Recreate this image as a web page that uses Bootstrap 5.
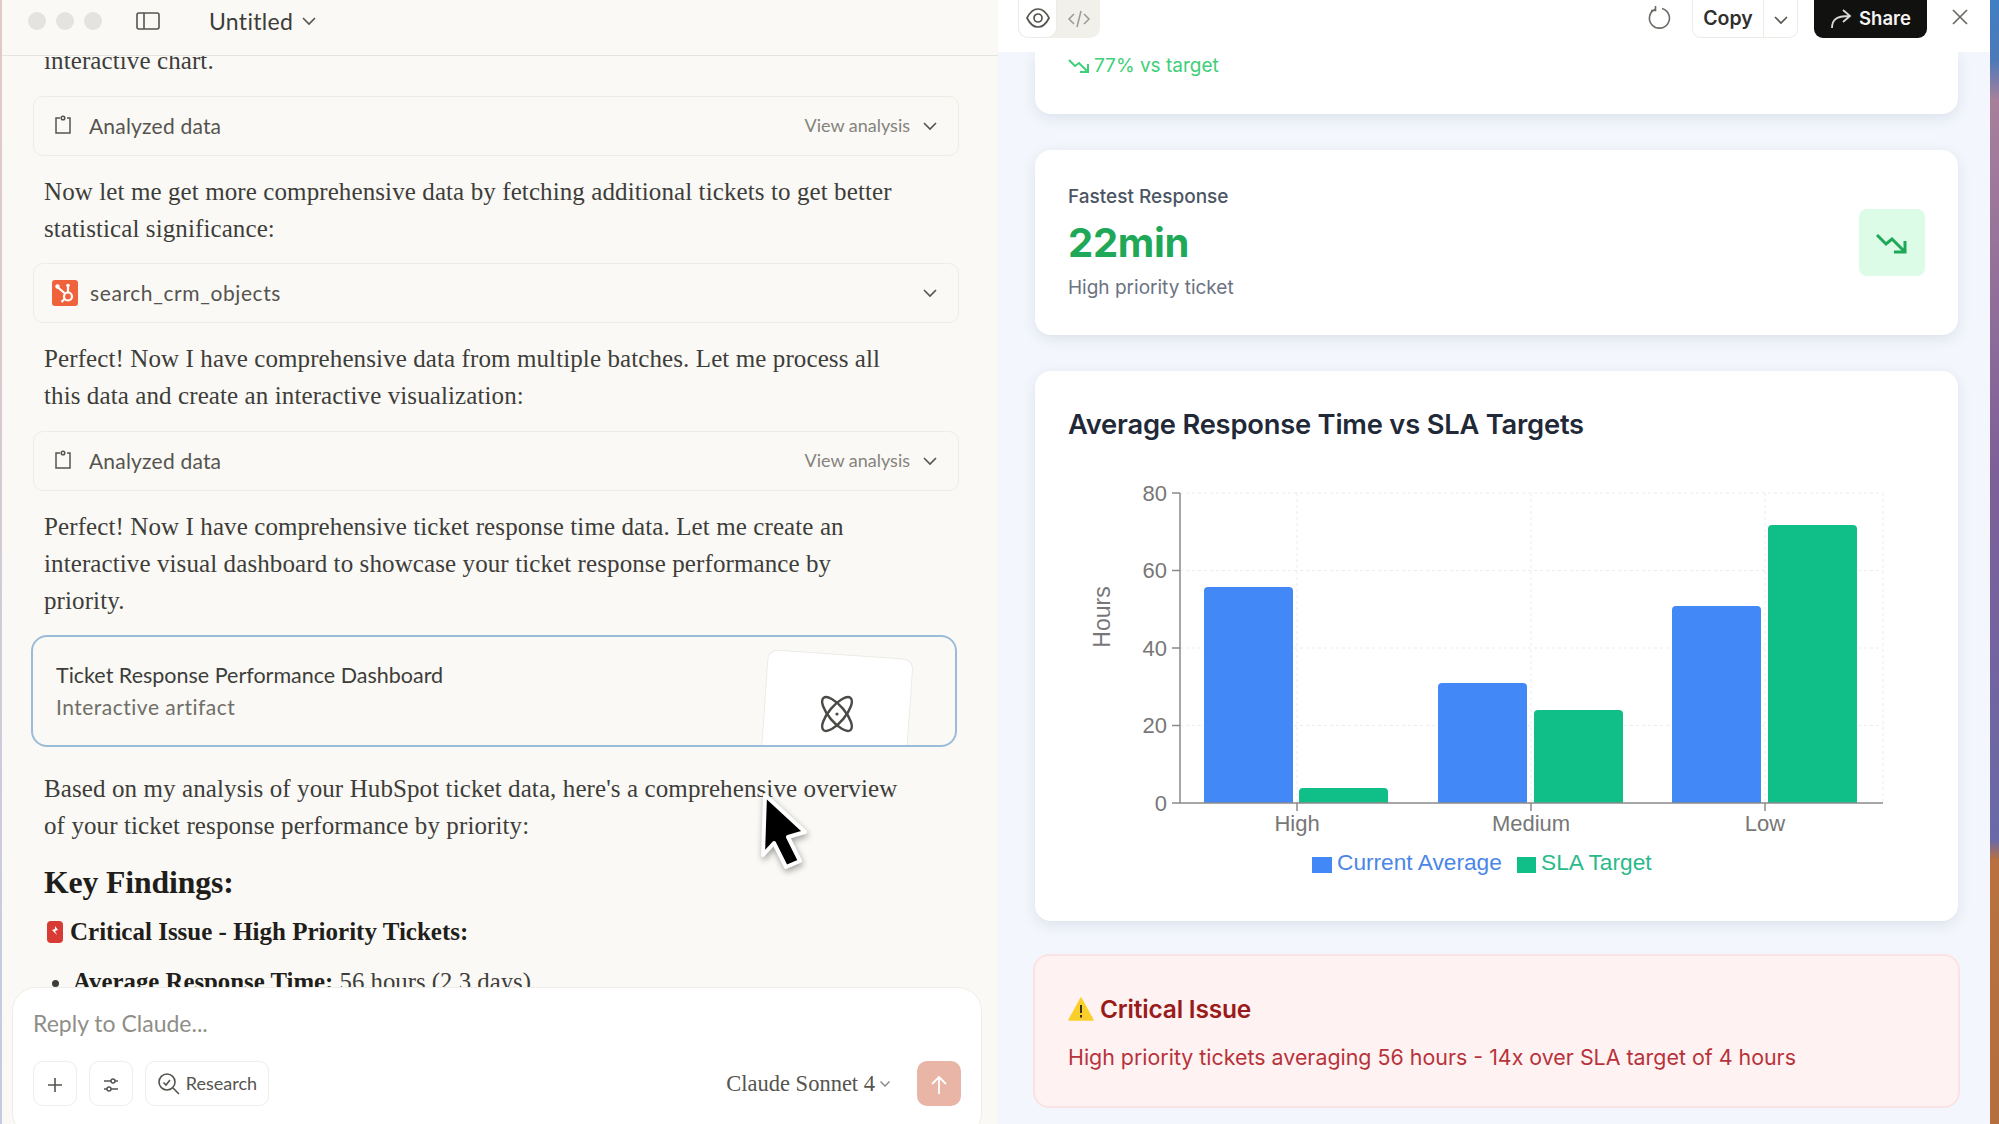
<!DOCTYPE html>
<html lang="en">
<head>
  <meta charset="UTF-8" />
  <title>Untitled - Claude</title>
  <link href="https://cdn.jsdelivr.net/npm/bootstrap@5.3.3/dist/css/bootstrap.min.css" rel="stylesheet">
  <style>
    html, body { height: 100%; }
    body { background: #fff; overflow: hidden; font-family: "Inter", "Liberation Sans", sans-serif; }
    .app-shell { height: 1124px; }
    .wall-left { width: 2px; background: linear-gradient(#e3c9c6, #c3cce4); }
    .wall-right { width: 9px; background: linear-gradient(#3f7fc4 0, #4d79b8 60px, #a8809c 100px, #7d5f98 480px, #6a6aa8 840px, #b8713f 860px, #b56f3e 100%); }

    /* chat side */
    .chat-pane { width: 996px; background: #faf9f5; position: relative; overflow: hidden; }
    .chat-head { height: 56px; background: #faf9f5; border-bottom: 1px solid #e6e4de; padding: 12px 0 0 26px; position: relative; z-index: 2; flex-shrink: 0; }
    .light-dots { gap: 10px; margin-right: 25px; }
    .light-dot { width: 18px; height: 18px; border-radius: 50%; background: #e4e3df; }
    .doc-name { font-size: 23px; line-height: 18px; color: #3d3d3a; font-family: "Lato", sans-serif; margin-left: 62px; letter-spacing: .3px; }
    .side-icon { margin-left: 9px; margin-right: -13px; }
    .chat-flow { padding: 0 39px 0 31px; margin-top: -14px; font-family: "Liberation Serif", serif; color: #3d3d3a; }
    .chat-msg { font-size: 25px; line-height: 37px; margin: 0 11px 16.5px 11px; letter-spacing: .1px; width: 860px; }
    .tool-row { height: 60px; border: 1px solid #eeece6; border-radius: 10px; background: #faf9f5; padding: 0 20px 0 19px; margin-bottom: 17px; font-family: "Lato", sans-serif; font-size: 21px; letter-spacing: .2px; color: #55544f; }
    .tool-link { font-size: 18px; color: #85837d; letter-spacing: 0; margin-right: 12px; }
    .tool-code { margin-left: 12px; letter-spacing: .6px; }
    .hub-logo { margin-left: -1px; }
    .artifact-box { height: 112px; width: 926px; margin-left: -2px; border: 2px solid #9bbcd9; border-radius: 16px; padding: 22px 23px; position: relative; overflow: hidden; margin-bottom: 23px; font-family: "Lato", sans-serif; }
    .artifact-name { font-size: 21.5px; color: #3d3d3a; line-height: 32px; }
    .artifact-kind { font-size: 21px; color: #6f6e68; line-height: 32px; letter-spacing: .5px; }
    .artifact-thumb { position: absolute; left: 730px; top: 17px; width: 146px; height: 140px; background: #fff; border: 1px solid #ecebe6; border-radius: 10px; transform: rotate(4deg); }
    .artifact-atom { position: absolute; left: 785px; top: 58px; }
    .key-title { font-size: 31.7px; font-weight: 700; line-height: 40px; margin: 19px 11px 10px; color: #1f1e1b; letter-spacing: -.1px; }
    .crit-line { font-size: 25px; font-weight: 700; line-height: 37px; margin: 0 11px 13px 13px; color: #1f1e1b; gap: 6px; }
    .finding-list { font-size: 24.8px; line-height: 37px; margin: 0; padding-left: 40px; }
    .finding-list strong { color: #1f1e1b; }
    .composer { position: absolute; left: 10px; top: 987px; width: 970px; height: 150px; background: #fff; border: 1px solid #efeee9; border-radius: 24px; padding: 19px 20px; z-index: 3; }
    .composer-hint { font-size: 23px; color: #8f8e88; font-family: "Lato", sans-serif; line-height: 32px; }
    .composer-tools { margin-top: 22px; }
    .tool-btn { height: 45px; min-width: 44px; padding: 0; border: 1px solid #eeede8; border-radius: 10px; background: #fff; color: #55544f; font-family: "Lato", sans-serif; font-size: 18px; }
    .tool-btn.research-btn { width: 124px; gap: 5px; }
    .model-pick { font-family: "Liberation Serif", serif; font-size: 22.5px; color: #55544f; margin-right: 18px; }
    .send-btn { width: 44px; height: 45px; padding: 0; background: #e8b5a6; border: 0; border-radius: 10px; }
    .send-btn:hover { background: #e8b5a6; }
    .cursor-art { position: absolute; left: 748px; top: 785px; z-index: 5; filter: drop-shadow(1px 3px 3px rgba(0, 0, 0, .35)); }

    /* artifact side */
    .art-pane { width: 992px; background: #f3f6fc; position: relative; overflow: hidden; }
    .art-head { height: 52px; background: #fff; position: relative; z-index: 2; flex-shrink: 0; padding: 0 21px 0 20px; }
    .view-toggle { margin-top: -1px; width: 82px; height: 39px; background: #f1f0ea; border-radius: 0 0 10px 10px; }
    .view-on { width: 39px; height: 39px; background: #fff; border: 1px solid #ecebe6; border-top: 0; border-radius: 0 0 10px 10px; }
    .copy-btn { height: 38px; border: 1px solid #ecebe6; border-top: 0; border-radius: 0 0 9px 9px; background: #fff; font-weight: 600; font-size: 19.5px; color: #2f2f2c; padding: 0; }
    .copy-main { width: 72px; border-right: 1px solid #ecebe6; }
    .copy-more { width: 34px; }
    .share-btn { width: 113px; height: 38px; background: #111110; color: #f4f4f2; border-radius: 0 0 9px 9px; font-weight: 600; font-size: 18.5px; gap: 7px; }
    .head-icon { margin-top: 5px; }
    .reload-icon { margin-right: 20px; }
    .art-flow { padding: 0 32px 0 37px; }
    .stat-box { border: 0; border-radius: 16px; background: #fff; box-shadow: 0 4px 14px rgba(30, 50, 90, .1); margin-bottom: 36px; }
    .stat-top { height: 62px; padding: 0 33px; border-radius: 0 0 16px 16px; color: #3ecf78; font-size: 19px; }
    .stat-main { height: 185px; padding: 0 33px; }
    .stat-label { font-size: 19px; font-weight: 500; color: #4b5563; line-height: 26px; padding-top: 1px; }
    .stat-value { font-size: 40px; font-weight: 700; color: #1ea858; line-height: 58px; margin-top: 4px; letter-spacing: -.3px; }
    .stat-note { font-size: 19px; color: #6b7280; line-height: 28px; margin-top: 2px; }
    .stat-icon { width: 66px; height: 67px; background: #dcfce7; border-radius: 8px; }
    .chart-box { height: 550px; padding: 34px 33px 0; margin-bottom: 33px; }
    .chart-title { font-size: 27.3px; font-weight: 600; color: #1f2937; line-height: 40px; margin: 0; letter-spacing: -.2px; }
    .chart-svg { position: absolute; left: 0; top: 0; }
    .chart-svg text { font-family: "Liberation Sans", Arial, sans-serif; }
    .issue-box { height: 154px; margin: 0 -2px; padding: 2px 33px 0; background: #fef2f2; border: 2px solid #fbe3e3; border-radius: 16px; color: #b8323a; }
    .issue-title { font-size: 24.5px; font-weight: 600; color: #991b1b; line-height: 36px; gap: 6px; margin-bottom: 14px; letter-spacing: -.2px; }
    .issue-text { font-size: 21.4px; line-height: 32px; }
  </style>
</head>
<body>
  <div class="app-shell d-flex">
    <div class="wall-left"></div>

    <!-- Chat -->
    <div class="chat-pane d-flex flex-column">
      <div class="chat-head d-flex align-items-start">
        <div class="light-dots d-flex">
          <span class="light-dot"></span><span class="light-dot"></span><span class="light-dot"></span>
        </div>
        <svg class="side-icon" width="24" height="18" viewBox="0 0 24 18" fill="none" stroke="#55544f" stroke-width="1.6"><rect x="1" y="1" width="22" height="16" rx="2"/><path d="M8 1v16"/></svg>
        <span class="doc-name">Untitled</span>
        <svg class="ms-2 mt-1" width="16" height="10" viewBox="0 0 16 10" fill="none" stroke="#55544f" stroke-width="1.6"><path d="M2 2l6 6 6-6"/></svg>
      </div>

      <div class="chat-flow">
        <p class="chat-msg">interactive chart.</p>

        <div class="tool-row d-flex align-items-center">
          <svg width="20" height="22" viewBox="0 0 20 22" fill="none" stroke="#55544f" stroke-width="1.5"><path d="M7 3H3v15h14V3h-3"/><circle cx="10" cy="3" r="1.8"/></svg>
          <span class="ms-3 flex-grow-1">Analyzed data</span>
          <span class="tool-link">View analysis</span>
          <svg width="16" height="10" viewBox="0 0 16 10" fill="none" stroke="#55544f" stroke-width="1.6"><path d="M2 2l6 6 6-6"/></svg>
        </div>

        <p class="chat-msg">Now let me get more comprehensive data by fetching additional tickets to get better statistical significance:</p>

        <div class="tool-row d-flex align-items-center">
          <svg class="hub-logo" width="26" height="26" viewBox="0 0 26 26"><rect width="26" height="26" rx="3" fill="#f0623c"/><g fill="none" stroke="#fff" stroke-width="2.2"><circle cx="16" cy="16.5" r="4"/><path d="M16 12.5V7M13 13.5L6 7.5M12.5 19l-3 3"/></g><circle cx="5.5" cy="6.5" r="2.2" fill="#fff"/><circle cx="16" cy="5.5" r="1.8" fill="#fff"/></svg>
          <span class="tool-code flex-grow-1">search_crm_objects</span>
          <svg width="16" height="10" viewBox="0 0 16 10" fill="none" stroke="#55544f" stroke-width="1.6"><path d="M2 2l6 6 6-6"/></svg>
        </div>

        <p class="chat-msg">Perfect! Now I have comprehensive data from multiple batches. Let me process all this data and create an interactive visualization:</p>

        <div class="tool-row d-flex align-items-center">
          <svg width="20" height="22" viewBox="0 0 20 22" fill="none" stroke="#55544f" stroke-width="1.5"><path d="M7 3H3v15h14V3h-3"/><circle cx="10" cy="3" r="1.8"/></svg>
          <span class="ms-3 flex-grow-1">Analyzed data</span>
          <span class="tool-link">View analysis</span>
          <svg width="16" height="10" viewBox="0 0 16 10" fill="none" stroke="#55544f" stroke-width="1.6"><path d="M2 2l6 6 6-6"/></svg>
        </div>

        <p class="chat-msg">Perfect! Now I have comprehensive ticket response time data. Let me create an interactive visual dashboard to showcase your ticket response performance by priority.</p>

        <div class="artifact-box">
          <div class="artifact-name">Ticket Response Performance Dashboard</div>
          <div class="artifact-kind">Interactive artifact</div>
          <div class="artifact-thumb"></div>
          <svg class="artifact-atom" width="38" height="38" viewBox="0 0 38 38" fill="none" stroke="#4a4a46" stroke-width="2.4">
            <ellipse cx="19" cy="19" rx="8" ry="21" transform="rotate(40 19 19)"/>
            <ellipse cx="19" cy="19" rx="8" ry="21" transform="rotate(-40 19 19)"/>
            <circle cx="19" cy="19" r="1.6" fill="#4a4a46" stroke="none"/>
          </svg>
        </div>

        <p class="chat-msg">Based on my analysis of your HubSpot ticket data, here's a comprehensive overview of your ticket response performance by priority:</p>

        <div class="key-title">Key Findings:</div>
        <div class="crit-line d-flex align-items-center">
          <svg width="18" height="24" viewBox="0 0 18 24"><rect x="1" y="1" width="16" height="22" rx="4" fill="#d83a34"/><path d="M9 6l3 4-3 1 2 4-5-5 3-1z" fill="#fff"/></svg>
          <span>Critical Issue - High Priority Tickets:</span>
        </div>
        <ul class="finding-list">
          <li><strong>Average Response Time:</strong> 56 hours (2.3 days)</li>
        </ul>
      </div>

      <div class="composer">
        <div class="composer-hint">Reply to Claude...</div>
        <div class="composer-tools d-flex align-items-center gap-2">
          <button class="btn tool-btn" aria-label="Add"><svg width="18" height="18" viewBox="0 0 18 18" stroke="#55544f" stroke-width="1.6"><path d="M9 2v14M2 9h14"/></svg></button>
          <button class="btn tool-btn ms-1" aria-label="Options"><svg width="18" height="18" viewBox="0 0 18 18" fill="none" stroke="#55544f" stroke-width="1.5"><path d="M2 5h7M13 5h3M2 13h3M9 13h7"/><circle cx="11" cy="5" r="2"/><circle cx="7" cy="13" r="2"/></svg></button>
          <button class="btn tool-btn research-btn ms-1 d-flex align-items-center justify-content-center"><svg width="24" height="24" viewBox="0 0 24 24" fill="none" stroke="#55544f" stroke-width="1.6"><circle cx="10" cy="10" r="8"/><path d="M16 16l6 6M6.5 10.5l2.5 2.5 4-5"/></svg>Research</button>
          <div class="model-pick ms-auto d-flex align-items-center gap-1">Claude Sonnet 4 <svg width="12" height="8" viewBox="0 0 12 8" fill="none" stroke="#85837d" stroke-width="1.3"><path d="M1.5 1.5L6 6l4.5-4.5"/></svg></div>
          <button class="btn send-btn" aria-label="Send"><svg width="18" height="20" viewBox="0 0 18 20" fill="none" stroke="#fff" stroke-width="1.8"><path d="M9 19V2M2 9l7-7 7 7"/></svg></button>
        </div>
      </div>

      <svg class="cursor-art" width="64" height="92" viewBox="0 0 64 92">
        <path d="M15 10L55 47 38 52 50 76 36 82 24 58 13 70z" fill="#000" stroke="#fff" stroke-width="4" stroke-linejoin="round"/>
      </svg>
    </div>

    <!-- Artifact -->
    <div class="art-pane d-flex flex-column">
      <div class="art-head d-flex align-items-start">
        <div class="view-toggle d-flex">
          <div class="view-on d-flex align-items-center justify-content-center">
            <svg width="26" height="22" viewBox="0 0 26 22" fill="none" stroke="#55544f" stroke-width="1.7"><path d="M2 11c3-6 7-9 11-9s8 3 11 9c-3 6-7 9-11 9s-8-3-11-9z"/><circle cx="13" cy="11" r="4"/></svg>
          </div>
          <div class="flex-grow-1 d-flex align-items-center justify-content-center">
            <svg width="24" height="20" viewBox="0 0 24 20" fill="none" stroke="#9b9a93" stroke-width="1.5"><path d="M7 5l-5 5 5 5M17 5l5 5-5 5M14 2l-4 16"/></svg>
          </div>
        </div>
        <svg class="head-icon reload-icon ms-auto" width="26" height="26" viewBox="0 0 26 26" fill="none" stroke="#6b6a65" stroke-width="1.6"><path d="M9 4.2A10 10 0 1 0 16 3.5M9.5 1v4.5H5"/></svg>
        <div class="d-flex">
          <button class="btn copy-btn copy-main rounded-end-0">Copy</button>
          <button class="btn copy-btn copy-more rounded-start-0 border-start-0"><svg width="16" height="10" viewBox="0 0 16 10" fill="none" stroke="#55544f" stroke-width="1.6"><path d="M2 2l6 6 6-6"/></svg></button>
        </div>
        <div class="share-btn d-flex align-items-center justify-content-center ms-3">
          <svg width="22" height="22" viewBox="0 0 22 22" fill="none" stroke="#d8d8d4" stroke-width="1.8"><path d="M2 20c0-8 4-12 17-12M13 2l7 6-7 6"/></svg>
          Share
        </div>
        <svg class="head-icon ms-4 mt-2" width="18" height="18" viewBox="0 0 18 18" stroke="#6b6a65" stroke-width="1.7"><path d="M2 2l14 14M16 2L2 16"/></svg>
      </div>

      <div class="art-flow">
        <div class="card stat-box stat-top flex-row align-items-start">
          <div class="d-flex align-items-center gap-1">
            <svg width="22" height="16" viewBox="0 0 22 16" fill="none" stroke="#3ecf78" stroke-width="2"><path d="M1 2l6 6 4-3 9 9M20 6v8h-8"/></svg>
            <span>77% vs target</span>
          </div>
        </div>

        <div class="card stat-box stat-main flex-row align-items-center justify-content-between">
          <div>
            <div class="stat-label">Fastest Response</div>
            <div class="stat-value">22min</div>
            <div class="stat-note">High priority ticket</div>
          </div>
          <div class="stat-icon d-flex align-items-center justify-content-center">
            <svg width="32" height="22" viewBox="0 0 32 22" fill="none" stroke="#1ea858" stroke-width="3"><path d="M1 3l9 9 6-5 13 13M29 9v11H18"/></svg>
          </div>
        </div>

        <div class="card stat-box chart-box position-relative">
          <h3 class="chart-title">Average Response Time vs SLA Targets</h3>
          <!-- coords relative to the card: x-1035, y-371 -->
          <svg class="chart-svg" width="922" height="550" viewBox="0 0 922 550">
            <g stroke="#ececec" stroke-width="1" stroke-dasharray="3 3" fill="none">
              <path d="M145 122H848M145 199.5H848M145 277H848M145 354.5H848"/>
              <path d="M262 122V432M496 122V432M730 122V432M848 122V432"/>
            </g>
            <g fill="#4289f7">
              <path d="M169 432V220a4 4 0 0 1 4-4h81a4 4 0 0 1 4 4V432z"/>
              <path d="M403 432V316a4 4 0 0 1 4-4h81a4 4 0 0 1 4 4V432z"/>
              <path d="M637 432V239a4 4 0 0 1 4-4h81a4 4 0 0 1 4 4V432z"/>
            </g>
            <g fill="#10bf87">
              <path d="M264 432V421a4 4 0 0 1 4-4h81a4 4 0 0 1 4 4V432z"/>
              <path d="M499 432V343a4 4 0 0 1 4-4h81a4 4 0 0 1 4 4V432z"/>
              <path d="M733 432V158a4 4 0 0 1 4-4h81a4 4 0 0 1 4 4V432z"/>
            </g>
            <g stroke="#8a8a8a" stroke-width="1.5" fill="none">
              <path d="M145 122V432H848"/>
              <path d="M137 122h8M137 199.5h8M137 277h8M137 354.5h8M137 432h8"/>
              <path d="M262 432v8M496 432v8M730 432v8"/>
            </g>
            <g fill="#777" font-size="22" text-anchor="end">
              <text x="132" y="130">80</text>
              <text x="132" y="207">60</text>
              <text x="132" y="285">40</text>
              <text x="132" y="362">20</text>
              <text x="132" y="440">0</text>
            </g>
            <g fill="#777" font-size="22" text-anchor="middle">
              <text x="262" y="460">High</text>
              <text x="496" y="460">Medium</text>
              <text x="730" y="460">Low</text>
            </g>
            <text x="0" y="0" fill="#777" font-size="23" text-anchor="middle" transform="translate(75 246) rotate(-90)">Hours</text>
            <rect x="277" y="486" width="20" height="16" fill="#4289f7"/>
            <text x="302" y="499" font-size="22.7" fill="#4a86e8">Current Average</text>
            <rect x="482" y="486" width="19" height="16" fill="#10bf87"/>
            <text x="506" y="499" font-size="22.7" fill="#2bb98a">SLA Target</text>
          </svg>
        </div>

        <div class="issue-box d-flex flex-column justify-content-center">
          <div class="issue-title d-flex align-items-center">
            <svg width="26" height="24" viewBox="0 0 26 24"><path d="M13 1L25 23H1z" fill="#fbcf2b" stroke="#fbcf2b" stroke-linejoin="round" stroke-width="1.5"/><path d="M13 8v8M13 18v2.4" stroke="#3a3320" stroke-width="2"/></svg>
            <span>Critical Issue</span>
          </div>
          <div class="issue-text">High priority tickets averaging 56 hours - 14x over SLA target of 4 hours</div>
        </div>
      </div>
    </div>

    <div class="wall-right"></div>
  </div>

  <script src="https://cdn.jsdelivr.net/npm/bootstrap@5.3.3/dist/js/bootstrap.bundle.min.js"></script>
</body>
</html>
